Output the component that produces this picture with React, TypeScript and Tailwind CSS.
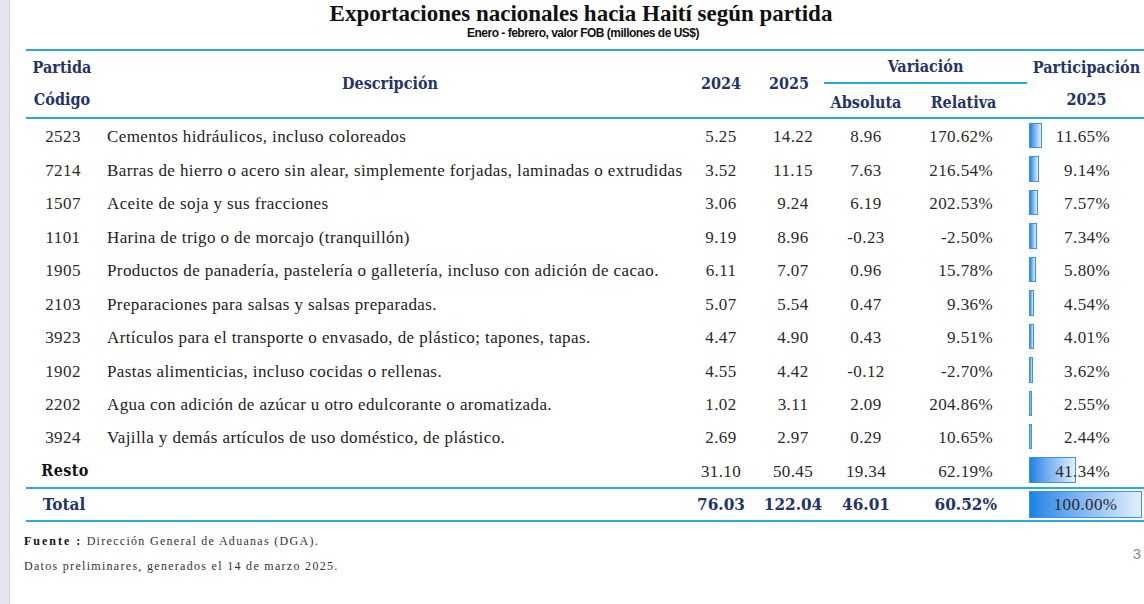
import React from "react";

type Row = {
  code: string;
  desc: string;
  y24: string;
  y25: string;
  abs: string;
  rel: string;
  part: number;
};

const rows: Row[] = [
  { code: "2523", desc: "Cementos hidráulicos, incluso coloreados", y24: "5.25", y25: "14.22", abs: "8.96", rel: "170.62%", part: 11.65 },
  { code: "7214", desc: "Barras de hierro o acero sin alear, simplemente forjadas, laminadas o extrudidas", y24: "3.52", y25: "11.15", abs: "7.63", rel: "216.54%", part: 9.14 },
  { code: "1507", desc: "Aceite de soja y sus fracciones", y24: "3.06", y25: "9.24", abs: "6.19", rel: "202.53%", part: 7.57 },
  { code: "1101", desc: "Harina de trigo o de morcajo (tranquillón)", y24: "9.19", y25: "8.96", abs: "-0.23", rel: "-2.50%", part: 7.34 },
  { code: "1905", desc: "Productos de panadería, pastelería o galletería, incluso con adición de cacao.", y24: "6.11", y25: "7.07", abs: "0.96", rel: "15.78%", part: 5.8 },
  { code: "2103", desc: "Preparaciones para salsas y salsas preparadas.", y24: "5.07", y25: "5.54", abs: "0.47", rel: "9.36%", part: 4.54 },
  { code: "3923", desc: "Artículos para el transporte o envasado, de plástico; tapones, tapas.", y24: "4.47", y25: "4.90", abs: "0.43", rel: "9.51%", part: 4.01 },
  { code: "1902", desc: "Pastas alimenticias, incluso cocidas o rellenas.", y24: "4.55", y25: "4.42", abs: "-0.12", rel: "-2.70%", part: 3.62 },
  { code: "2202", desc: "Agua con adición de azúcar u otro edulcorante o aromatizada.", y24: "1.02", y25: "3.11", abs: "2.09", rel: "204.86%", part: 2.55 },
  { code: "3924", desc: "Vajilla y demás artículos de uso doméstico, de plástico.", y24: "2.69", y25: "2.97", abs: "0.29", rel: "10.65%", part: 2.44 },
];

const cols = "grid grid-cols-[74px_588px_66px_76px_72px_125px_117px]";
const head = "[font-family:'DejaVu_Serif','Liberation_Serif',serif] [font-stretch:condensed] font-bold text-[#233468] text-[16px]";
const body = "[font-family:'Liberation_Serif',serif] text-[17px] tracking-[0.4px] text-[#2a2a2a]";

function Bar({ pct }: { pct: number }) {
  return (
    <div
      className="absolute left-[2px] top-[4px] bottom-[4px] border border-[#3b93e2] bg-gradient-to-r from-[#1682e6] to-[#e2effc]"
      style={{ width: Math.max(3, pct * 1.13) }}
    />
  );
}

export default function App() {
  return (
    <div className="w-[1144px] h-[604px] bg-white flex overflow-hidden">
      <div className="w-[10px] shrink-0 bg-[#e5e5ea] border-r border-[#d2d2d8]" />
      <div className="flex-1 relative">
        <div className="h-[49px] flex flex-col items-center pl-[8px]">
          <h1 className="[font-family:'Liberation_Serif',serif] font-bold text-[23px] leading-[26px] pt-[1px] text-[#111]">
            Exportaciones nacionales hacia Haití según partida
          </h1>
          <p className="[font-family:'Liberation_Sans',sans-serif] font-bold text-[12px] leading-[13px] tracking-[-0.5px] text-[#111] pl-[4px]">
            Enero - febrero, valor FOB (millones de US$)
          </p>
        </div>

        <div className="ml-[16px]">
          <div className="h-[2px] bg-[#2aa8e0]" />
          <div className={`${cols} grid-rows-[33px_33px] h-[66px] ${head}`}>
            <div className="row-span-2 flex flex-col items-center justify-between py-[7px] leading-[20px] pr-[2px]">
              <span>Partida</span>
              <span>Código</span>
            </div>
            <div className="row-span-2 flex items-center justify-center pr-[8px]">Descripción</div>
            <div className="row-span-2 flex items-center justify-center">2024</div>
            <div className="row-span-2 flex items-center justify-center pr-[6px]">2025</div>
            <div className="col-span-2 flex items-center justify-center border-b-2 border-[#2aa8e0] -ml-[6px] pt-[1px]">
              Variación
            </div>
            <div className="row-span-2 flex flex-col items-center justify-between py-[7px] leading-[20px] pl-[2px]">
              <span>Participación</span>
              <span>2025</span>
            </div>
            <div className="flex items-center justify-center pt-[4px]">Absoluta</div>
            <div className="flex items-center justify-center pt-[4px] pr-[2px]">Relativa</div>
          </div>
          <div className="h-[2px] bg-[#2aa8e0]" />

          {rows.map((r) => (
            <div key={r.code} className={`${cols} h-[33.45px] items-center ${body}`}>
              <div className="text-center pt-[3px]">{r.code}</div>
              <div className="pl-[7px] pt-[3px] whitespace-nowrap text-[#222]">{r.desc}</div>
              <div className="text-center pt-[3px]">{r.y24}</div>
              <div className="text-center pt-[3px] pl-[2px]">{r.y25}</div>
              <div className="text-center pt-[3px]">{r.abs}</div>
              <div className="text-right pr-[34px] pt-[3px]">{r.rel}</div>
              <div className="relative h-full flex items-center justify-end pr-[34px] pt-[3px]">
                <Bar pct={r.part} />
                <span className="relative">{r.part.toFixed(2)}%</span>
              </div>
            </div>
          ))}

          <div className={`${cols} h-[33.45px] items-center ${body}`}>
            <div className={`${head} !text-[#111] text-center pl-[4px] pt-[2px]`}>Resto</div>
            <div />
            <div className="text-center pt-[3px]">31.10</div>
            <div className="text-center pt-[3px] pl-[2px]">50.45</div>
            <div className="text-center pt-[3px]">19.34</div>
            <div className="text-right pr-[34px] pt-[3px]">62.19%</div>
            <div className="relative h-full flex items-center justify-end pr-[34px] pt-[3px]">
              <Bar pct={41.34} />
              <span className="relative">41.34%</span>
            </div>
          </div>

          <div className="h-[2px] bg-[#2aa8e0]" />
          <div className={`${cols} h-[31px] items-center ${head} text-[17px]`}>
            <div className="text-center pl-[2px]">Total</div>
            <div />
            <div className="text-center">76.03</div>
            <div className="text-center pl-[2px]">122.04</div>
            <div className="text-center">46.01</div>
            <div className="text-right pr-[30px]">60.52%</div>
            <div className="relative h-full flex items-center justify-center">
              <div className="absolute left-[2px] right-[2px] top-[2px] bottom-[2px] border border-[#3b93e2] bg-gradient-to-r from-[#1682e6] to-[#e2effc]" />
              <span className={`relative ${body} font-normal text-[#1b2b58]`}>100.00%</span>
            </div>
          </div>
          <div className="h-[2px] bg-[#2aa8e0]" />
        </div>

        <div className="ml-[14px] mt-[7px] [font-family:'Liberation_Serif',serif] text-[12px] tracking-[1.3px] text-[#333] leading-[25px]">
          <p>
            <span className="font-bold tracking-[2px] text-[#111]">Fuente :</span> Dirección General de Aduanas (DGA).
          </p>
          <p>Datos preliminares, generados el 14 de marzo 2025.</p>
        </div>

        <div className="absolute right-[3px] top-[543px] [font-family:'Liberation_Sans',sans-serif] text-[15px] text-[#8a8a8a]">
          3
        </div>
      </div>
    </div>
  );
}
